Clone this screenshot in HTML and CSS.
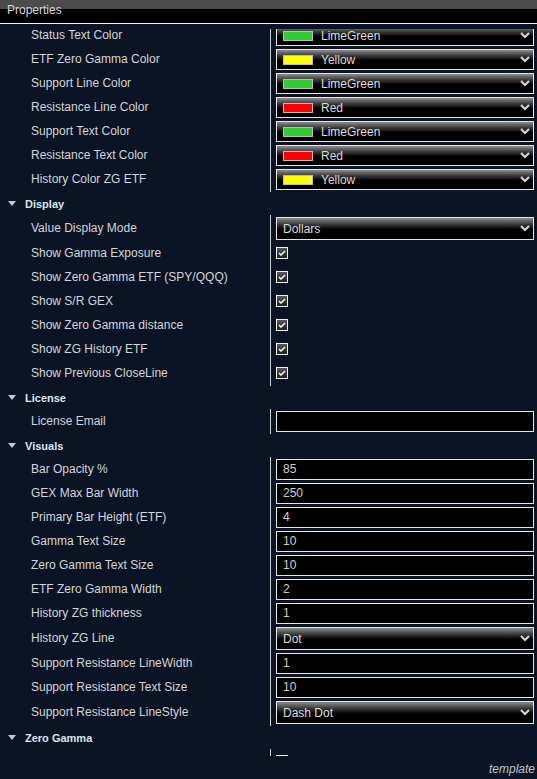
FILE: index.html
```html
<!DOCTYPE html>
<html lang="en">
<head>
    <meta charset="UTF-8">
    <meta name="viewport" content="width=device-width, initial-scale=1.0">
    <title>Properties</title>
    <link rel="stylesheet" href="styles.css">
</head>
<body>
    <div class="panel">
        <div class="panel-title">Properties</div>

        <div class="viewport">
            <div class="list">

                <!-- Colors -->
                <div class="row"><div class="label">Status Text Color</div><div class="value"><div class="dropdown"><span class="swatch lime"></span>LimeGreen<svg class="chevron" viewBox="0 0 10 7"><polyline points="1,1 5,5 9,1"/></svg></div></div></div>
                <div class="row"><div class="label">ETF Zero Gamma Color</div><div class="value"><div class="dropdown"><span class="swatch yellow"></span>Yellow<svg class="chevron" viewBox="0 0 10 7"><polyline points="1,1 5,5 9,1"/></svg></div></div></div>
                <div class="row"><div class="label">Support Line Color</div><div class="value"><div class="dropdown"><span class="swatch lime"></span>LimeGreen<svg class="chevron" viewBox="0 0 10 7"><polyline points="1,1 5,5 9,1"/></svg></div></div></div>
                <div class="row"><div class="label">Resistance Line Color</div><div class="value"><div class="dropdown"><span class="swatch red"></span>Red<svg class="chevron" viewBox="0 0 10 7"><polyline points="1,1 5,5 9,1"/></svg></div></div></div>
                <div class="row"><div class="label">Support Text Color</div><div class="value"><div class="dropdown"><span class="swatch lime"></span>LimeGreen<svg class="chevron" viewBox="0 0 10 7"><polyline points="1,1 5,5 9,1"/></svg></div></div></div>
                <div class="row"><div class="label">Resistance Text Color</div><div class="value"><div class="dropdown"><span class="swatch red"></span>Red<svg class="chevron" viewBox="0 0 10 7"><polyline points="1,1 5,5 9,1"/></svg></div></div></div>
                <div class="row"><div class="label">History Color ZG ETF</div><div class="value"><div class="dropdown"><span class="swatch yellow"></span>Yellow<svg class="chevron" viewBox="0 0 10 7"><polyline points="1,1 5,5 9,1"/></svg></div></div></div>

                <!-- Display -->
                <div class="section"><span class="caret"></span>Display</div>
                <div class="row tall"><div class="label">Value Display Mode</div><div class="value"><div class="dropdown">Dollars<svg class="chevron" viewBox="0 0 10 7"><polyline points="1,1 5,5 9,1"/></svg></div></div></div>
                <div class="row"><div class="label">Show Gamma Exposure</div><div class="value"><span class="checkbox"><svg viewBox="0 0 10 10"><polyline points="2,5 4,7 8,3"/></svg></span></div></div>
                <div class="row"><div class="label">Show Zero Gamma ETF (SPY/QQQ)</div><div class="value"><span class="checkbox"><svg viewBox="0 0 10 10"><polyline points="2,5 4,7 8,3"/></svg></span></div></div>
                <div class="row"><div class="label">Show S/R GEX</div><div class="value"><span class="checkbox"><svg viewBox="0 0 10 10"><polyline points="2,5 4,7 8,3"/></svg></span></div></div>
                <div class="row"><div class="label">Show Zero Gamma distance</div><div class="value"><span class="checkbox"><svg viewBox="0 0 10 10"><polyline points="2,5 4,7 8,3"/></svg></span></div></div>
                <div class="row"><div class="label">Show ZG History ETF</div><div class="value"><span class="checkbox"><svg viewBox="0 0 10 10"><polyline points="2,5 4,7 8,3"/></svg></span></div></div>
                <div class="row"><div class="label">Show Previous CloseLine</div><div class="value"><span class="checkbox"><svg viewBox="0 0 10 10"><polyline points="2,5 4,7 8,3"/></svg></span></div></div>

                <!-- License -->
                <div class="section"><span class="caret"></span>License</div>
                <div class="row"><div class="label">License Email</div><div class="value"><div class="field"></div></div></div>

                <!-- Visuals -->
                <div class="section"><span class="caret"></span>Visuals</div>
                <div class="row"><div class="label">Bar Opacity %</div><div class="value"><div class="field">85</div></div></div>
                <div class="row"><div class="label">GEX Max Bar Width</div><div class="value"><div class="field">250</div></div></div>
                <div class="row"><div class="label">Primary Bar Height (ETF)</div><div class="value"><div class="field">4</div></div></div>
                <div class="row"><div class="label">Gamma Text Size</div><div class="value"><div class="field">10</div></div></div>
                <div class="row"><div class="label">Zero Gamma Text Size</div><div class="value"><div class="field">10</div></div></div>
                <div class="row"><div class="label">ETF Zero Gamma Width</div><div class="value"><div class="field">2</div></div></div>
                <div class="row"><div class="label">History ZG thickness</div><div class="value"><div class="field">1</div></div></div>
                <div class="row tall"><div class="label">History ZG Line</div><div class="value"><div class="dropdown">Dot<svg class="chevron" viewBox="0 0 10 7"><polyline points="1,1 5,5 9,1"/></svg></div></div></div>
                <div class="row"><div class="label">Support Resistance LineWidth</div><div class="value"><div class="field">1</div></div></div>
                <div class="row"><div class="label">Support Resistance Text Size</div><div class="value"><div class="field">10</div></div></div>
                <div class="row tall"><div class="label">Support Resistance LineStyle</div><div class="value"><div class="dropdown">Dash Dot<svg class="chevron" viewBox="0 0 10 7"><polyline points="1,1 5,5 9,1"/></svg></div></div></div>

                <!-- Zero Gamma -->
                <div class="section"><span class="caret"></span>Zero Gamma</div>
                <div class="row"><div class="label"></div><div class="value"><span class="checkbox"></span></div></div>
            </div>
        </div>

        <div class="footer">template</div>
    </div>
</body>
</html>
```

FILE: styles.css
```css
/* General Layout */
body {
    margin: 0;
    background-color: #0b1425;
    font-family: "Liberation Sans", Arial, sans-serif;
    font-size: 12px;
    color: #d4d4d4;
}

.panel {
    width: 537px;
    height: 779px;
    overflow: hidden;
}

/* Title bar */
.panel-title {
    height: 23px;
    border-bottom: 1px solid #f0f0f0;
    background: linear-gradient(to bottom, #4b4b4b 0, #4b4b4b 9px, #000 9px);
    padding-left: 7px;
    line-height: 21px;
    color: #d8d8d8;
}

/* Scrolling list */
.viewport {
    margin-top: 5px;
    height: 727px;
    overflow: hidden;
}

.list {
    margin-top: -6px;
}

.row {
    display: grid;
    grid-template-columns: 270px 1fr;
    height: 24px;
}

.row.tall {
    height: 26px;
}

.label {
    padding-left: 31px;
    line-height: 25px;
    white-space: nowrap;
}

.row.tall .label {
    line-height: 27px;
}

.value {
    border-left: 1px solid #d0d0d0;
    padding: 2px 3px 0 5px;
}

/* Section headers */
.section {
    height: 24px;
    box-sizing: border-box;
    padding: 1px 0 0 8px;
    display: flex;
    align-items: center;
    font-size: 11px;
    font-weight: bold;
    color: #dbe4f2;
}

.caret {
    width: 0;
    height: 0;
    border-left: 4px solid transparent;
    border-right: 4px solid transparent;
    border-top: 5px solid #c8c8c8;
    margin-right: 9px;
}

/* Dropdowns */
.dropdown {
    position: relative;
    box-sizing: border-box;
    height: 21px;
    border: 1px solid #e6e6e6;
    background: linear-gradient(to bottom, #8c8c8c 0%, #3a3a3a 30%, #000 55%, #000 100%);
    display: flex;
    align-items: center;
    padding-left: 6px;
    color: #dcdcdc;
}

.row.tall .dropdown {
    height: 23px;
}

.swatch {
    width: 28px;
    height: 8px;
    border: 1px solid #bcbcbc;
    margin-right: 8px;
}

.swatch.lime { background-color: #32cd32; }
.swatch.yellow { background-color: #ffff00; }
.swatch.red { background-color: #ff0000; }

.chevron {
    position: absolute;
    right: 3px;
    top: 50%;
    width: 10px;
    height: 7px;
    margin-top: -4px;
    fill: none;
    stroke: #d8d8d8;
    stroke-width: 2;
}

/* Text fields */
.field {
    box-sizing: border-box;
    height: 21px;
    border: 1px solid #e6e6e6;
    background-color: #000;
    padding-left: 6px;
    line-height: 19px;
    color: #d0d0d0;
}

/* Checkboxes */
.checkbox {
    display: block;
    box-sizing: border-box;
    width: 12px;
    height: 12px;
    margin-top: 4px;
    border: 1px solid #f0f0f0;
    background: linear-gradient(to bottom, #5a5a5a, #1e1e1e);
}

.checkbox svg {
    display: block;
    width: 10px;
    height: 10px;
    fill: none;
    stroke: #e8e8e8;
    stroke-width: 1.6;
}

/* Footer */
.footer {
    height: 23px;
    box-sizing: border-box;
    padding: 6px 2px 0 0;
    text-align: right;
    font-style: italic;
    line-height: 14px;
    color: #c4c4c4;
}
```
